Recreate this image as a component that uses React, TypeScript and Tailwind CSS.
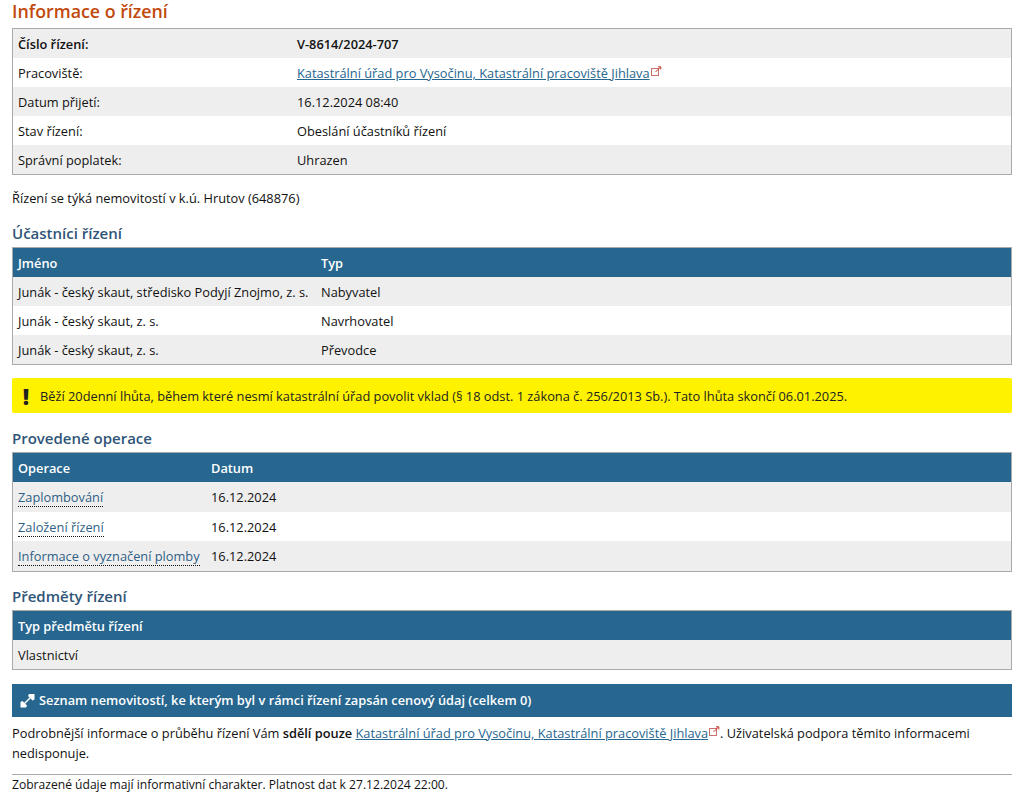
const font = { fontFamily: '"Open Sans", "Noto Sans", sans-serif' };

const infoRows = [
  { label: "Pracoviště:", value: "link" },
  { label: "Datum přijetí:", value: "16.12.2024 08:40" },
  { label: "Stav řízení:", value: "Obeslání účastníků řízení" },
  { label: "Správní poplatek:", value: "Uhrazen" },
];

const participants = [
  { name: "Junák - český skaut, středisko Podyjí Znojmo, z. s.", type: "Nabyvatel" },
  { name: "Junák - český skaut, z. s.", type: "Navrhovatel" },
  { name: "Junák - český skaut, z. s.", type: "Převodce" },
];

const operations = ["Zaplombování", "Založení řízení", "Informace o vyznačení plomby"];

function ExternalIcon() {
  return (
    <svg width="11" height="11" viewBox="0 0 11 11" className="inline-block align-[1px] ml-px" fill="none">
      <rect x="0.5" y="2.5" width="7" height="7" stroke="#c9706b" strokeWidth="1" />
      <path d="M4.5 6 L9.5 1 M7 0.8 H9.8 V3.5" stroke="#c0392b" strokeWidth="1" />
    </svg>
  );
}

function OfficeLink() {
  return (
    <>
      <a className="text-[#26668f] underline">Katastrální úřad pro Vysočinu, Katastrální pracoviště Jihlava</a>
      <ExternalIcon />
    </>
  );
}

function Heading({ children }: { children: string }) {
  return <h3 className="text-[15px] leading-5 font-semibold text-[#2f5578]">{children}</h3>;
}

export default function App() {
  return (
    <div className="pl-3 pr-5 bg-white text-[12.8px] leading-5 text-[#111]" style={font}>
      <h2 className="text-[17.8px] leading-[22px] font-semibold text-[#c2490c]">Informace o řízení</h2>

      <table className="mt-[6px] w-full border border-[#aaa] border-separate border-spacing-0">
        <tbody>
          <tr className="bg-[#eee] h-[29px] font-semibold">
            <td className="pl-[5px] w-[284px]">Číslo řízení:</td>
            <td>V-8614/2024-707</td>
          </tr>
          {infoRows.map((row, i) => (
            <tr key={row.label} className={i % 2 === 0 ? "bg-white h-[29px]" : "bg-[#eee] h-[29px]"}>
              <td className="pl-[5px]">{row.label}</td>
              <td>{row.value === "link" ? <OfficeLink /> : row.value}</td>
            </tr>
          ))}
        </tbody>
      </table>

      <p className="mt-[13px]">Řízení se týká nemovitostí v k.ú. Hrutov (648876)</p>

      <div className="mt-[15px]"><Heading>Účastníci řízení</Heading></div>
      <table className="mt-1 w-full border border-[#aaa] border-separate border-spacing-0">
        <thead>
          <tr className="bg-[#26668f] h-[29px] text-white font-semibold text-left">
            <th className="pl-[5px] w-[308px] font-semibold">Jméno</th>
            <th className="font-semibold">Typ</th>
          </tr>
        </thead>
        <tbody>
          {participants.map((row, i) => (
            <tr key={row.type} className={i % 2 === 0 ? "bg-[#eee] h-[29px]" : "bg-white h-[29px]"}>
              <td className="pl-[5px] whitespace-nowrap">{row.name}</td>
              <td>{row.type}</td>
            </tr>
          ))}
        </tbody>
      </table>

      <div className="mt-[13px] h-[35px] flex items-center rounded-[2px] bg-[#fff200] text-[#222]">
        <span className="w-[28px] text-center text-[22px] font-extrabold leading-none">!</span>
        <span>Běží 20denní lhůta, během které nesmí katastrální úřad povolit vklad (§ 18 odst. 1 zákona č. 256/2013 Sb.). Tato lhůta skončí 06.01.2025.</span>
      </div>

      <div className="mt-[15px]"><Heading>Provedené operace</Heading></div>
      <table className="mt-1 w-full border border-[#aaa] border-separate border-spacing-0">
        <thead>
          <tr className="bg-[#26668f] h-[29px] text-white text-left">
            <th className="pl-[5px] w-[198px] font-semibold">Operace</th>
            <th className="font-semibold">Datum</th>
          </tr>
        </thead>
        <tbody>
          {operations.map((op, i) => (
            <tr key={op} className={i % 2 === 0 ? "bg-[#eee] h-[29.5px]" : "bg-white h-[29.5px]"}>
              <td className={i === 1 ? "pl-[5px] pt-[2px] whitespace-nowrap" : "pl-[5px] whitespace-nowrap"}>
                <a className="text-[#2f5f85] border-b border-dotted border-[#111]">{op}</a>
              </td>
              <td className={i === 1 ? "pt-[2px]" : ""}>16.12.2024</td>
            </tr>
          ))}
        </tbody>
      </table>

      <div className="mt-[14px]"><Heading>Předměty řízení</Heading></div>
      <table className="mt-1 w-full border border-[#aaa] border-separate border-spacing-0">
        <thead>
          <tr className="bg-[#26668f] h-[29px] text-white text-left">
            <th className="pl-[5px] pt-[2px] font-semibold">Typ předmětu řízení</th>
          </tr>
        </thead>
        <tbody>
          <tr className="bg-[#eee] h-[29px]">
            <td className="pl-[5px] pt-[2px]">Vlastnictví</td>
          </tr>
        </tbody>
      </table>

      <div className="mt-[14px] h-[33px] flex items-center gap-[4px] pl-[8px] bg-[#26668f] text-white font-semibold">
        <svg width="15" height="15" viewBox="0 0 15 15" fill="white">
          <path d="M9 1 H14.5 V6.5 L12.5 7.5 L8 3 Z" />
          <path d="M0.5 14.5 V9 L2.5 8 L7 12.5 L6 14.5 Z" />
          <path d="M4.5 10.5 L10.5 4.5" stroke="white" strokeWidth="1.5" />
        </svg>
        <span>Seznam nemovitostí, ke kterým byl v rámci řízení zapsán cenový údaj (celkem 0)</span>
      </div>

      <p className="mt-[6px] leading-[20px]">
        Podrobnější informace o průběhu řízení Vám <strong className="font-semibold">sdělí pouze</strong> <OfficeLink />. Uživatelská podpora těmito informacemi nedisponuje.
      </p>

      <div className="mt-[11px] border-t border-[#aaa] text-[12.1px] pb-[17px]">Zobrazené údaje mají informativní charakter. Platnost dat k 27.12.2024 22:00.</div>
    </div>
  );
}
